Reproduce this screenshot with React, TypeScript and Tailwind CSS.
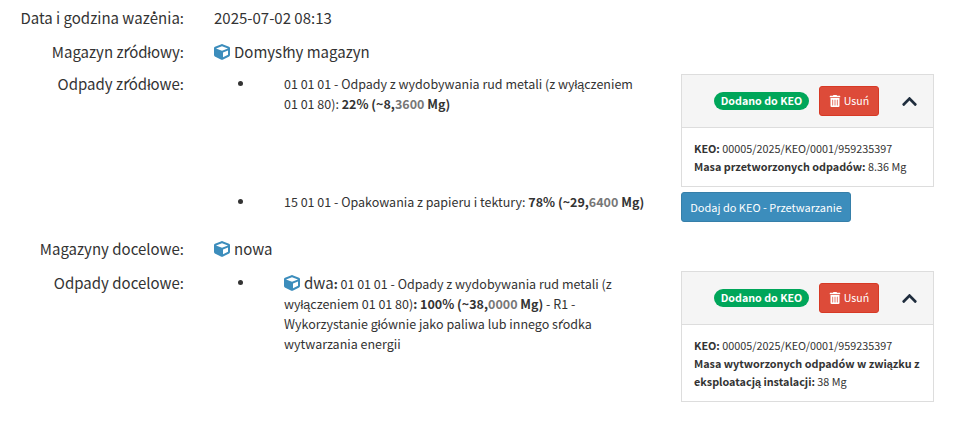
import { FaCube, FaTrashAlt, FaChevronUp } from "react-icons/fa";

function Row({ label, children, cls }: { label: string; children: React.ReactNode; cls: string }) {
  return (
    <div className={`flex ${cls}`}>
      <div className="w-[184px] shrink-0 text-right text-[15px] leading-[20px]">{label}</div>
      <div className="ml-[30px] min-w-0 flex-1 text-[15px] leading-[20px]">{children}</div>
    </div>
  );
}

function Cube() {
  return <FaCube className="inline-block text-[16px] text-[#3c8dbc] align-[-2px] mr-[4px]" />;
}

function Panel({ children, cls }: { children: React.ReactNode; cls: string }) {
  return (
    <div className={`w-[253px] shrink-0 border border-[#ddd] ${cls}`}>
      <div className="flex h-[53px] items-center bg-[#f5f5f5] border-b border-[#ddd] pl-[32px]">
        <span className="rounded-full bg-[#00a65a] px-[7px] h-[18px] w-[95px] flex items-center justify-center whitespace-nowrap text-white text-[10.7px] font-bold">Dodano do KEO</span>
        <button className="ml-[10px] flex h-[30px] w-[60px] items-center justify-center rounded-[3px] border border-[#d73925] bg-[#dd4b39] text-[10.6px] text-white">
          <FaTrashAlt className="mr-[3px] text-[12px]" />
          Usuń
        </button>
        <FaChevronUp className="ml-[22px] text-[17px] text-[#1f2d3d]" />
      </div>
      <div className="pl-[12px] pr-[8px] py-[11px] text-[10.8px] leading-[18px]">{children}</div>
    </div>
  );
}

const Bullet = () => (
  <div className="w-[70px] shrink-0 pl-[24px]">
    <span className="mt-[7px] block size-[5px] rounded-full bg-[#333]" />
  </div>
);

export default function App() {
  return (
    <div className="h-[423px] w-[961px] overflow-hidden bg-white pt-[8px] text-[#333] font-['Noto_Sans_CJK_SC','Liberation_Sans',sans-serif]">
      <Row label="Data i godzina ważenia:" cls="mb-[14px]">2025-07-02 08:13</Row>
      <Row label="Magazyn źródłowy:" cls="mb-[12px]">
        <Cube />Domyślny magazyn
      </Row>
      <Row label="Odpady źródłowe:" cls="mb-[17px]">
        <div className="text-[12.5px] leading-[20px]">
          <div className="flex">
            <Bullet />
            <div className="w-[397px] shrink-0 pr-[40px]">
              01 01 01 - Odpady z wydobywania rud metali (z wyłączeniem 01 01 80): <b>22% (~8,<span className="text-[#777]">3600</span> Mg)</b>
            </div>
            <Panel cls="">
              <b>KEO:</b> 00005/2025/KEO/0001/959235397<br />
              <b>Masa przetworzonych odpadów:</b> 8.36 Mg
            </Panel>
          </div>
          <div className="flex mt-[5px]">
            <Bullet />
            <div className="w-[397px] shrink-0">
              15 01 01 - Opakowania z papieru i tektury: <b>78% (~29,<span className="text-[#777]">6400</span> Mg)</b>
            </div>
            <button className="h-[30px] w-[170px] whitespace-nowrap rounded-[3px] border border-[#367fa9] bg-[#3c8dbc] text-[11px] text-white">Dodaj do KEO - Przetwarzanie</button>
          </div>
        </div>
      </Row>
      <Row label="Magazyny docelowe:" cls="mb-[14px]">
        <Cube />nowa
      </Row>
      <Row label="Odpady docelowe:" cls="">
        <div className="text-[12.5px] leading-[20px]">
          <div className="flex">
            <Bullet />
            <div className="w-[397px] shrink-0 pr-[40px]">
              <Cube /><span className="text-[15px]">dwa</span><b>:</b> 01 01 01 - Odpady z wydobywania rud metali (z wyłączeniem 01 01 80)<b>: 100% (~38,<span className="text-[#777]">0000</span> Mg)</b> - R1 - Wykorzystanie głównie jako paliwa lub innego środka wytwarzania energii
            </div>
            <Panel cls="-mt-[2px]">
              <b>KEO:</b> 00005/2025/KEO/0001/959235397<br />
              <b>Masa wytworzonych odpadów w związku z eksploatacją instalacji:</b> 38 Mg
            </Panel>
          </div>
        </div>
      </Row>
    </div>
  );
}
